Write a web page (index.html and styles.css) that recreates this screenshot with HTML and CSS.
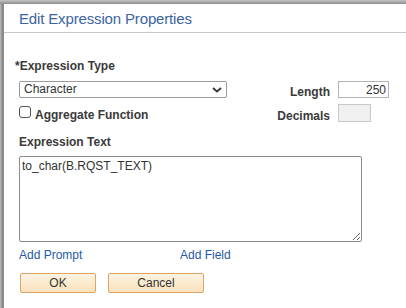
FILE: index.html
```html
<!DOCTYPE html>
<html>
<head>
<meta charset="utf-8">
<link rel="stylesheet" href="styles.css">
</head>
<body>
<div class="frame">
  <div class="dialog">
    <div class="header"><h1 class="title">Edit Expression Properties</h1></div>
    <div class="content">
      <div class="req-label">*Expression Type</div>
      <div class="top-row">
        <div class="left-col">
          <div class="select-wrap">
            <select class="select"><option>Character</option></select>
            <svg class="chev" width="10" height="6" viewBox="0 0 10 6"><path d="M1 1 L5 4.5 L9 1" fill="none" stroke="#333" stroke-width="1.8"/></svg>
          </div>
          <label class="check-row"><input type="checkbox" class="check"><span class="check-text">Aggregate Function</span></label>
        </div>
        <div class="right-col">
          <div class="field-label">Length</div>
          <input class="num-input" type="text" value="250">
          <div class="field-label">Decimals</div>
          <input class="dec-input" type="text" disabled>
        </div>
      </div>
      <div class="section-label">Expression Text</div>
      <textarea class="expr">to_char(B.RQST_TEXT)</textarea>
      <div class="links">
        <a class="link link-prompt" href="#">Add Prompt</a>
        <a class="link" href="#">Add Field</a>
      </div>
      <div class="buttons">
        <button class="btn btn-ok">OK</button>
        <button class="btn btn-cancel">Cancel</button>
      </div>
    </div>
  </div>
</div>
</body>
</html>
```

FILE: styles.css
```css
html, body {
  margin: 0;
  padding: 0;
  width: 406px;
  height: 308px;
  overflow: hidden;
  font-family: "Liberation Sans", Arial, sans-serif;
  font-size: 12px;
  color: #333;
}

.frame {
  box-sizing: border-box;
  width: 406px;
  height: 308px;
  padding: 4px 0 0 4px;
  background:
    linear-gradient(to bottom, #c4c4c4 0, #8e8e8e 4px, transparent 4px),
    linear-gradient(to right, #bcbcbc 0, #7e7e7e 3px, #9a9a9a 4px);
}

.dialog {
  background: #fff;
  height: 100%;
}

.header {
  height: 29px;
  box-sizing: border-box;
  padding: 6px 0 0 15px;
  border-bottom: 1px solid #c8c8c8;
}

.title {
  margin: 0;
  font-size: 15px;
  line-height: 18px;
  font-weight: normal;
  color: #3b65a0;
  letter-spacing: -0.15px;
}

.content {
  padding: 26px 0 0 11px;
}

.req-label,
.section-label {
  font-weight: bold;
  line-height: 14px;
  color: #3a3a3a;
}

.section-label {
  margin: 13px 0 0 4px;
}

.top-row {
  display: flex;
  margin-top: 8px;
}

.left-col {
  margin-left: 4px;
  width: 208px;
}

.select-wrap {
  position: relative;
  height: 17px;
}

.select {
  appearance: none;
  -webkit-appearance: none;
  box-sizing: border-box;
  width: 208px;
  height: 17px;
  margin: 0;
  padding: 0 0 0 4px;
  border: 1px solid #9a9a9a;
  border-radius: 2px;
  background: #fff;
  font-family: inherit;
  font-size: 12px;
  line-height: 15px;
  color: #333;
}

.chev {
  position: absolute;
  left: 193px;
  top: 6px;
}

.check-row {
  display: flex;
  align-items: flex-start;
  margin-top: 8px;
  font-weight: bold;
  color: #3a3a3a;
}

.check {
  appearance: none;
  -webkit-appearance: none;
  box-sizing: border-box;
  width: 12px;
  height: 12px;
  margin: 0 4px 0 0;
  border: 1px solid #555;
  border-radius: 3px;
  background: #fff;
}

.check-text {
  padding-top: 2px;
  line-height: 14px;
}

.right-col {
  margin-left: auto;
  margin-right: 17px;
  display: grid;
  grid-template-columns: auto auto;
  column-gap: 8px;
  row-gap: 6px;
  align-items: end;
  justify-items: end;
}

.field-label {
  font-weight: bold;
  line-height: 12px;
  color: #3a3a3a;
}

.num-input,
.dec-input {
  box-sizing: border-box;
  margin: 0;
  font-family: inherit;
  font-size: 12px;
  color: #333;
}

.num-input {
  width: 51px;
  height: 17px;
  padding: 0 2px 0 2px;
  border: 1px solid #b4b4b4;
  text-align: right;
  background: #fff;
  justify-self: start;
}

.dec-input {
  width: 33px;
  height: 18px;
  padding: 0;
  border: 1px solid #c8c8c8;
  background: #f0f0f0;
  justify-self: start;
}

.expr {
  display: block;
  box-sizing: border-box;
  width: 343px;
  height: 86px;
  margin: 7px 0 0 4px;
  padding: 2px 2px;
  border: 1px solid #8a8a8a;
  border-radius: 2px;
  font-family: inherit;
  font-size: 12px;
  line-height: 14px;
  color: #333;
  resize: both;
}

.links {
  display: flex;
  margin: 6px 0 0 4px;
  line-height: 14px;
}

.link {
  color: #1f5aa6;
  text-decoration: none;
}

.link-prompt {
  width: 161px;
}

.buttons {
  display: flex;
  gap: 12px;
  margin: 11px 0 0 5px;
}

.btn {
  box-sizing: border-box;
  height: 20px;
  margin: 0;
  padding: 0;
  border: 1px solid #e0a468;
  border-radius: 2px;
  background: linear-gradient(to bottom, #fdf3e2, #f9e2bc);
  font-family: inherit;
  font-size: 12px;
  line-height: 18px;
  color: #333;
}

.btn-ok {
  width: 76px;
}

.btn-cancel {
  width: 96px;
}
```
